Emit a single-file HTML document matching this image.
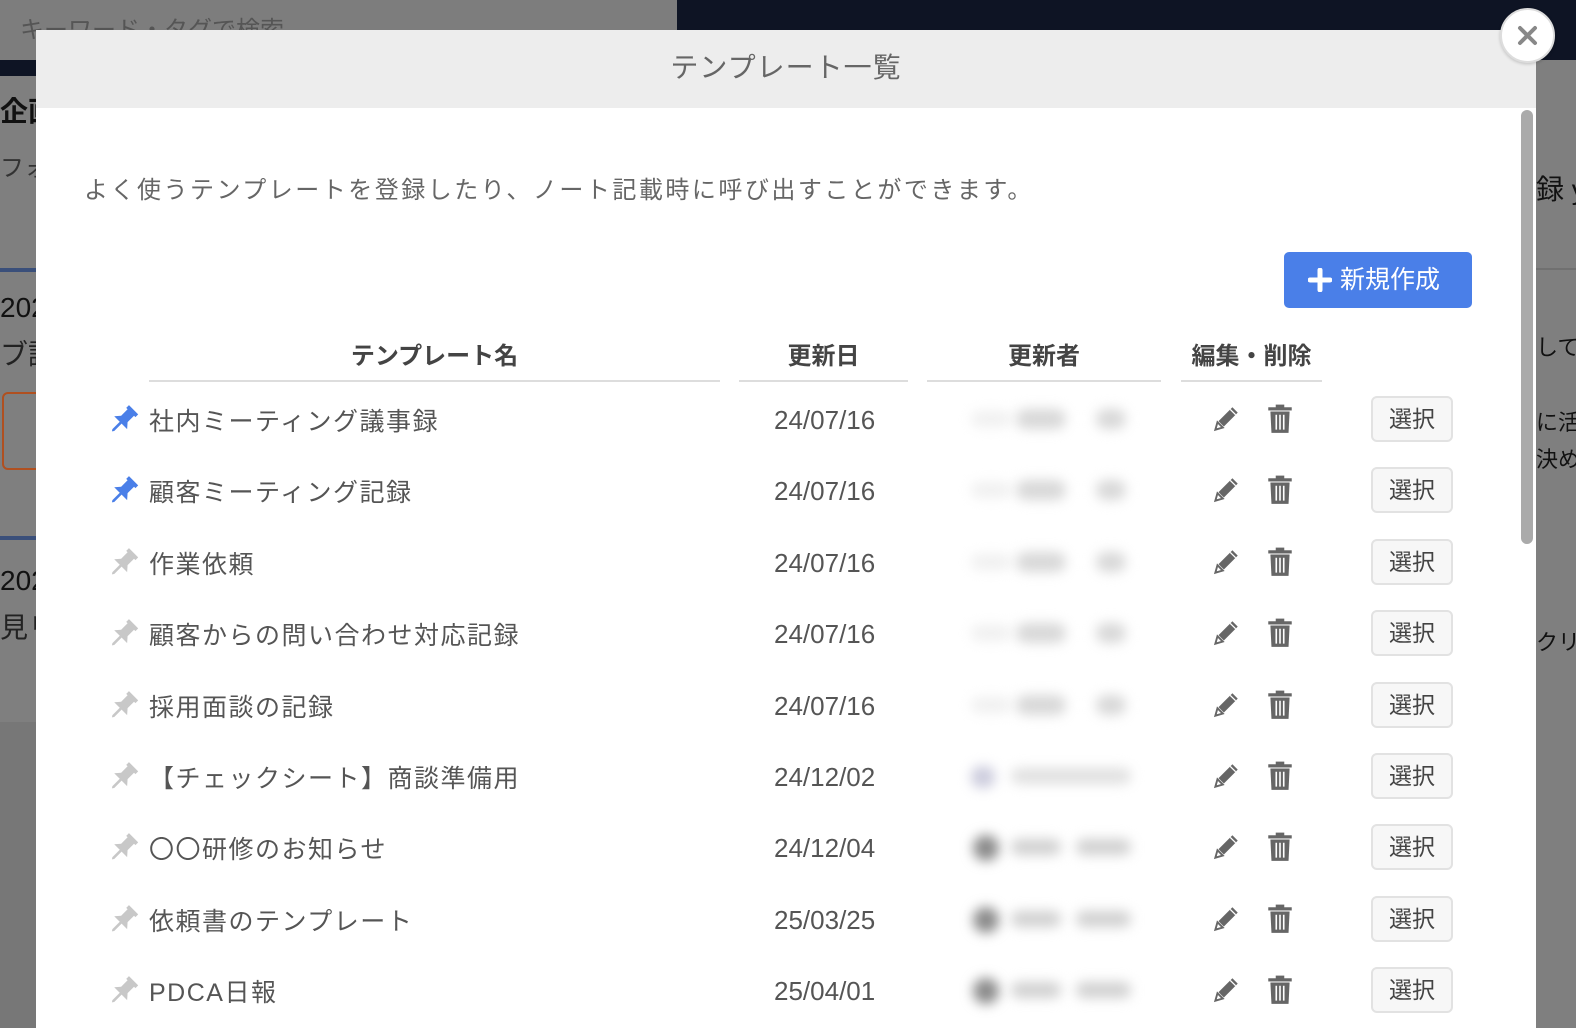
<!DOCTYPE html>
<html><head><meta charset="utf-8">
<style>
*{margin:0;padding:0;box-sizing:border-box}
html,body{width:1576px;height:1028px;overflow:hidden}
body{background:#7f7f7f;font-family:"Liberation Sans","Noto Sans CJK JP",sans-serif;position:relative}
.topbar{position:absolute;left:677px;top:0;width:900px;height:60px;background:#0e1424}
.srch{position:absolute;left:0;top:0;width:677px;height:60px;background:#7d7d7d;color:#555;font-size:24px;padding:10px 0 0 20px;white-space:nowrap}
.navl{position:absolute;left:0;top:60px;width:40px;height:16px;background:#0e1424}
.bgtext{position:absolute;color:#111;font-size:28px;white-space:nowrap}
.modal{position:absolute;left:36px;top:30px;width:1500px;height:998px;background:#fff;overflow:hidden}
.mh{height:78px;background:#ededed;text-align:center;font-size:28px;color:#666;line-height:76px;letter-spacing:1px}
.desc{position:absolute;left:48px;top:140px;font-size:24px;color:#666;letter-spacing:2.5px;white-space:nowrap}
.new{position:absolute;left:1248px;top:222px;width:188px;height:56px;background:#4a7fe8;border-radius:5px;color:#fff;font-size:25px;line-height:56px;padding-left:56px}
.new .pl{position:absolute;left:24px;top:16px}
.th{position:absolute;top:306px;font-size:24px;font-weight:bold;color:#444;text-align:center;height:46px;border-bottom:2px solid #ddd}
.row{position:absolute;left:0;width:1500px;height:71px}
.pin{position:absolute;left:70px;top:-16px}
.nm{position:absolute;left:113px;top:-17px;font-size:25px;color:#555;letter-spacing:1.5px;white-space:nowrap}
.dt{position:absolute;left:738px;top:-14px;font-size:26px;color:#555}
.blur{position:absolute;filter:blur(6px);background:#ccc;border-radius:10px}
.ed{position:absolute;left:1174px;top:-16px}
.tr{position:absolute;left:1230px;top:-16px}
.sel{position:absolute;left:1335px;top:-23px;width:82px;height:46px;border:2px solid #e2e2e2;border-radius:6px;background:#f7f7f7;font-size:23px;color:#444;text-align:center;line-height:42px}
.scroll{position:absolute;left:1485px;top:80px;width:12px;height:434px;background:#aaa;border-radius:6px}
.close{position:absolute;left:1500px;top:8px;width:55px;height:55px;border-radius:50%;background:#fff;border:2px solid #ddd;box-shadow:0 1px 3px rgba(0,0,0,.2)}
</style></head><body>
<div class="srch">キーワード・タグで検索</div>
<div class="topbar"></div>
<div class="navl"></div>
<div class="bgtext" style="left:0;top:90px;font-weight:bold">企画</div>
<div class="bgtext" style="left:0;top:148px;font-size:24px;color:#333">フォ</div>
<div class="bgtext" style="left:0;top:292px">202</div>
<div class="bgtext" style="left:0;top:333px;color:#222">ブ議</div>
<div style="position:absolute;left:2px;top:392px;width:40px;height:78px;border:2px solid #b05020;border-radius:6px"></div>
<div class="bgtext" style="left:0;top:565px">202</div>
<div class="bgtext" style="left:0;top:606px;color:#222">見リ</div>
<div style="position:absolute;left:0;top:268px;width:36px;height:4px;background:#3a4f7a"></div>
<div style="position:absolute;left:0;top:536px;width:36px;height:4px;background:#3a4f7a"></div>
<div style="position:absolute;left:0;top:722px;width:36px;height:306px;background:#777"></div>
<div style="position:absolute;left:1536px;top:268px;width:40px;height:2px;background:#707070"></div>
<div class="bgtext" style="left:1536px;top:168px;font-size:28px">録 y</div>
<div class="bgtext" style="left:1536px;top:330px;font-size:22px">して</div>
<div class="bgtext" style="left:1536px;top:405px;font-size:22px">に活</div>
<div class="bgtext" style="left:1536px;top:442px;font-size:22px">決め</div>
<div class="bgtext" style="left:1536px;top:625px;font-size:22px">クリ</div>

<div class="modal">
<div class="mh">テンプレート一覧</div>
<div class="desc">よく使うテンプレートを登録したり、ノート記載時に呼び出すことができます。</div>
<div class="new"><svg class="pl" width="24" height="24" viewBox="0 0 24 24"><path d="M12 2v20M2 12h20" stroke="#fff" stroke-width="5" stroke-linecap="round"/></svg>新規作成</div>
<div class="th" style="left:113px;width:571px">テンプレート名</div>
<div class="th" style="left:703px;width:169px">更新日</div>
<div class="th" style="left:891px;width:234px">更新者</div>
<div class="th" style="left:1145px;width:141px">編集・削除</div>
<div class="scroll"></div>
<div id="rows"></div>
</div>
<div class="close"><svg width="51" height="51" viewBox="0 0 51 51"><path d="M18 18l15 15M33 18l-15 15" stroke="#888" stroke-width="4" stroke-linecap="round"/></svg></div>
<script>
var data=[["社内ミーティング議事録","24/07/16",1,0],["顧客ミーティング記録","24/07/16",1,0],["作業依頼","24/07/16",0,0],["顧客からの問い合わせ対応記録","24/07/16",0,0],["採用面談の記録","24/07/16",0,0],["【チェックシート】商談準備用","24/12/02",0,1],["〇〇研修のお知らせ","24/12/04",0,2],["依頼書のテンプレート","25/03/25",0,2],["PDCA日報","25/04/01",0,2]];
var h="";
data.forEach(function(d,i){
 var y=389+i*71.4;
 var c=d[2]?"#4a7fe8":"#c8c8c8";
 var blur=d[3]==0?'<div class="blur" style="left:935px;top:-8px;width:40px;height:16px;background:#f0f0f0"></div><div class="blur" style="left:980px;top:-10px;width:50px;height:20px;background:#d8d8d8"></div><div class="blur" style="left:1060px;top:-10px;width:30px;height:20px;background:#d8d8d8"></div>':(d[3]==1?'<div class="blur" style="left:935px;top:-10px;width:24px;height:22px;background:#ccd"></div><div class="blur" style="left:975px;top:-8px;width:120px;height:16px;background:#e0e0e0"></div>':'<div class="blur" style="left:937px;top:-12px;width:26px;height:26px;background:#8a8a8a;border-radius:50%"></div><div class="blur" style="left:975px;top:-8px;width:50px;height:16px;background:#d0d0d0"></div><div class="blur" style="left:1040px;top:-8px;width:55px;height:16px;background:#d0d0d0"></div>');
 h+='<div class="row" style="top:'+y+'px">'+
 '<svg class="pin" width="34" height="34" viewBox="0 0 30 30"><g transform="rotate(45 15 15) translate(6 2) scale(1.15)"><path d="M3 0h10v3h-1.5v7l3.5 4H1l3.5-4V3H3z M7 14h2v8l-1 1.5L7 22z" fill="'+c+'"/></g></svg>'+
 '<div class="nm">'+d[0]+'</div><div class="dt">'+d[1]+'</div>'+blur+
 '<svg class="ed" width="32" height="32" viewBox="0 0 30 30"><path d="M21 4l5 5-13 13-5-5z" fill="#666"/><path d="M7 18l5 5-7 2z" fill="none" stroke="#666" stroke-width="1.8"/><path d="M19 6l5 5" stroke="#fff" stroke-width="1.2"/></svg>'+
 '<svg class="tr" width="28" height="32" viewBox="0 0 26 30"><rect x="2" y="4" width="22" height="3" fill="#666"/><rect x="9" y="1.5" width="8" height="3" fill="#666"/><path d="M4 8h18l-1 20H5z" fill="#666"/><path d="M9.5 11v14M13 11v14M16.5 11v14" stroke="#fff" stroke-width="1.5"/></svg>'+
 '<div class="sel">選択</div></div>';
});
document.getElementById("rows").innerHTML=h;
</script>
</body></html>
